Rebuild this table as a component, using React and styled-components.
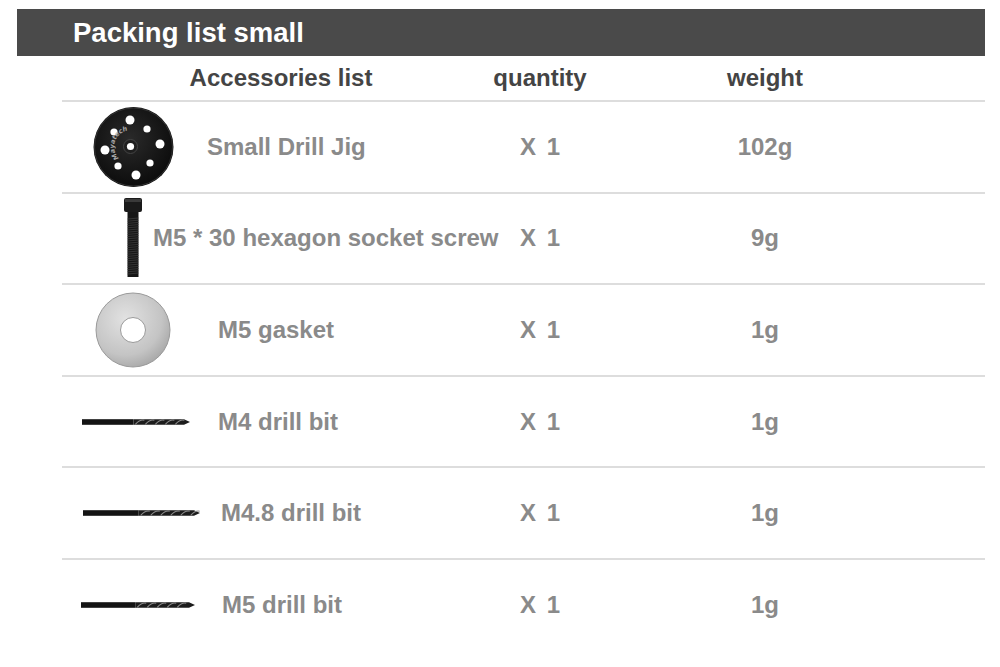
import React from 'react'
import styled, { createGlobalStyle } from 'styled-components'

const GlobalStyle = createGlobalStyle`
  html, body {
    margin: 0;
    padding: 0;
    background: #ffffff;
  }
  body {
    font-family: "Liberation Sans", Arial, sans-serif;
  }
`

const Page = styled.div`
  width: 1000px;
  height: 667px;
  padding-top: 9px;
  box-sizing: border-box;
  background: #fff;
  overflow: hidden;
`

const TitleBar = styled.div`
  margin-left: 17px;
  width: 968px;
  height: 47px;
  background: #4a4a4a;
  display: flex;
  align-items: center;
  padding-left: 56px;
  box-sizing: border-box;
`

const Title = styled.h1`
  margin: 0;
  color: #ffffff;
  font-size: 27.5px;
  font-weight: 700;
`

const Table = styled.div`
  margin-left: 62px;
  width: 923px;
`

const HeadRow = styled.div`
  display: grid;
  grid-template-columns: 142px 296px 80px 110px 150px 1fr;
  height: 44px;
  align-items: center;
`

const HeadCell = styled.div`
  grid-column: ${p => p.span || 'auto'};
  display: flex;
  justify-content: center;
  white-space: nowrap;
  color: #444444;
  font-size: 24px;
  font-weight: 700;
`

const Row = styled.div`
  display: grid;
  grid-template-columns: 142px 296px 80px 110px 150px 1fr;
  height: 91.6px;
  align-items: center;
  border-top: 2px solid #dddddd;
  box-sizing: border-box;
`

const Pic = styled.div`
  display: flex;
  justify-content: center;
  align-items: center;
  height: 100%;
  padding-left: ${p => p.shift || 0}px;
`

const Name = styled.div`
  margin-left: ${p => p.indent}px;
  white-space: nowrap;
  color: #8a8a8a;
  font-size: 24px;
  font-weight: 700;
`

const Qty = styled.div`
  display: flex;
  justify-content: center;
  color: #8a8a8a;
  font-size: 24px;
  font-weight: 700;
  word-spacing: 4px;
  white-space: nowrap;
`

const Weight = styled.div`
  grid-column: 5;
  display: flex;
  justify-content: center;
  color: #8a8a8a;
  font-size: 24px;
  font-weight: 700;
`

const Jig = () => {
  const holes = [
    [129, 118, 4.5], [113, 130, 3.6], [146, 127, 3.6], [104, 148, 4.5],
    [159, 142, 4.5], [117, 164, 3.6], [149, 161, 3.6], [135, 173, 4.5],
  ]
  return (
    <svg width="84" height="84" viewBox="90 103 84 84">
      <defs>
        <radialGradient id="jigg" cx="45%" cy="40%" r="60%">
          <stop offset="0%" stopColor="#2a2a2a" />
          <stop offset="100%" stopColor="#0c0c0c" />
        </radialGradient>
        <path id="jigarc" d="M118 156 A13 13 0 0 1 141 133" />
      </defs>
      <circle cx="132.5" cy="145" r="40" fill="url(#jigg)" />
      <circle cx="132.5" cy="145" r="39" fill="none" stroke="#333" strokeWidth="1" />
      {holes.map(([x, y, r], i) => (
        <circle key={i} cx={x} cy={y} r={r} fill="#ffffff" />
      ))}
      <circle cx="129.5" cy="144.5" r="7" fill="#1f1f1f" stroke="#444" strokeWidth="1" />
      <circle cx="129.5" cy="144.5" r="3.6" fill="#ffffff" />
      <text fontSize="6.5" fontStyle="italic" fontWeight="700" fill="#a8a8a8" fontFamily="DejaVu Sans, sans-serif">
        <textPath href="#jigarc">Mayatech</textPath>
      </text>
    </svg>
  )
}

const Screw = () => (
  <svg width="24" height="82" viewBox="0 0 24 82">
    <rect x="3" y="1" width="18" height="14" rx="2" fill="#1a1a1a" />
    <rect x="4" y="2" width="16" height="3" fill="#3a3a3a" />
    <rect x="6.5" y="15" width="11" height="65" fill="#161616" />
    {Array.from({ length: 26 }).map((_, i) => (
      <line key={i} x1="6.5" y1={22 + i * 2.2} x2="17.5" y2={21 + i * 2.2} stroke="#3c3c3c" strokeWidth="0.8" />
    ))}
  </svg>
)

const Gasket = () => (
  <svg width="78" height="78" viewBox="0 0 78 78">
    <defs>
      <radialGradient id="gask" cx="40%" cy="35%" r="70%">
        <stop offset="0%" stopColor="#e2e2e2" />
        <stop offset="70%" stopColor="#c4c4c4" />
        <stop offset="100%" stopColor="#a6a6a6" />
      </radialGradient>
    </defs>
    <circle cx="39" cy="39" r="37" fill="url(#gask)" stroke="#9a9a9a" strokeWidth="1" />
    <circle cx="39" cy="39" r="12.5" fill="#ffffff" stroke="#9a9a9a" strokeWidth="1" />
  </svg>
)

const Drill = ({ length }) => {
  const shank = length * 0.48
  const flutes = []
  for (let x = shank + 2; x < length - 8; x += 10) flutes.push(x)
  return (
    <svg width={length + 2} height="8" viewBox={`0 0 ${length + 2} 8`}>
      <rect x="0" y="1.2" width={shank} height="5.6" fill="#141414" />
      <path d={`M${shank} 1.2 L${length - 5} 1.2 L${length + 1} 4 L${length - 5} 6.8 L${shank} 6.8 Z`} fill="#1c1c1c" />
      {flutes.map((x, i) => (
        <path key={i} d={`M${x} 6.3 Q${x + 5} 1 ${x + 9} 2.2`} stroke="#8c8c8c" strokeWidth="1.1" fill="none" />
      ))}
    </svg>
  )
}

const items = [
  { pic: <Jig />, name: 'Small Drill Jig', indent: 3, weight: '102g' },
  { pic: <Screw />, name: 'M5 * 30 hexagon socket screw', indent: -51, weight: '9g' },
  { pic: <Gasket />, name: 'M5 gasket', indent: 14, weight: '1g' },
  { pic: <Drill length={107} />, shift: 6, name: 'M4 drill bit', indent: 14, weight: '1g' },
  { pic: <Drill length={116} />, shift: 18, name: 'M4.8 drill bit', indent: 17, weight: '1g' },
  { pic: <Drill length={113} />, shift: 10, name: 'M5 drill bit', indent: 18, weight: '1g' },
]

export default function App() {
  return (
    <Page>
      <GlobalStyle />
      <TitleBar>
        <Title>Packing list small</Title>
      </TitleBar>
      <Table>
        <HeadRow>
          <HeadCell span="1 / 3">Accessories list</HeadCell>
          <HeadCell>quantity</HeadCell>
          <HeadCell span="5">weight</HeadCell>
        </HeadRow>
        {items.map(item => (
          <Row key={item.name}>
            <Pic shift={item.shift}>{item.pic}</Pic>
            <Name indent={item.indent}>{item.name}</Name>
            <Qty>X 1</Qty>
            <Weight>{item.weight}</Weight>
          </Row>
        ))}
      </Table>
    </Page>
  )
}
